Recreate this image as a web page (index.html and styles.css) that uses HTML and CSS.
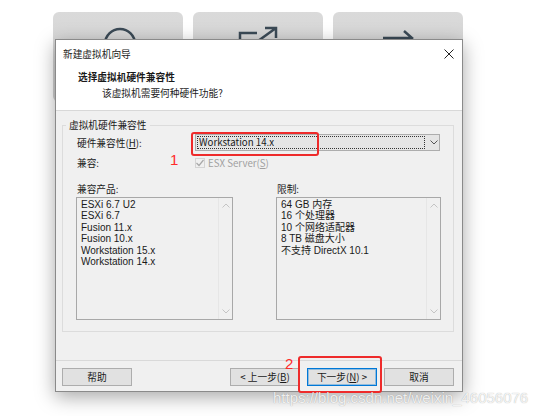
FILE: index.html
```html
<!DOCTYPE html>
<html lang="zh-CN">
<head>
    <meta charset="UTF-8">
    <title>新建虚拟机向导</title>
    <link rel="stylesheet" href="styles.css">
</head>
<body>
    <div class="desktop">
        <div class="tiles">
            <div class="tile">
                <svg class="tile-icon" width="40" height="40" viewBox="0 0 40 40">
                    <circle cx="22" cy="19" r="15" fill="none" stroke="#3b4a56" stroke-width="2.5"/>
                </svg>
            </div>
            <div class="tile">
                <svg class="tile-icon" width="40" height="40" viewBox="0 0 40 40">
                    <path d="M19 8 H2 V30" fill="none" stroke="#3b4a56" stroke-width="2.5"/>
                    <path d="M27 3 H38 V13 M38 3 L20 16" fill="none" stroke="#3b4a56" stroke-width="2.5"/>
                </svg>
            </div>
            <div class="tile">
                <svg class="tile-icon" width="40" height="40" viewBox="0 0 40 40">
                    <path d="M5 13 H34 M26 6 L34 13 L26 20" fill="none" stroke="#3b4a56" stroke-width="2.5"/>
                </svg>
            </div>
        </div>

        <div class="dialog">
            <div class="titlebar">
                <span>新建虚拟机向导</span>
                <svg class="close" width="10" height="10" viewBox="0 0 10 10">
                    <path d="M0.5 0.5 L9.5 9.5 M9.5 0.5 L0.5 9.5" stroke="#222" stroke-width="1"/>
                </svg>
            </div>
            <div class="header">
                <div class="header-title">选择虚拟机硬件兼容性</div>
                <div class="header-sub">该虚拟机需要何种硬件功能?</div>
            </div>

            <div class="body">
                <fieldset class="group">
                    <legend>虚拟机硬件兼容性</legend>
                    <div class="row">
                        <label class="row-label">硬件兼容性(<u>H</u>):</label>
                        <div class="combo">
                            <span class="combo-focus">Workstation 14.x</span>
                            <svg class="chevron" width="8" height="5" viewBox="0 0 8 5">
                                <path d="M0.5 0.5 L4 4 L7.5 0.5" fill="none" stroke="#555" stroke-width="1"/>
                            </svg>
                        </div>
                    </div>
                    <div class="row">
                        <label class="row-label">兼容:</label>
                        <span class="check">
                            <svg width="10" height="10" viewBox="0 0 10 10">
                                <path d="M1.5 5 L4 7.5 L8.5 2" fill="none" stroke="#a8a8a8" stroke-width="1.2"/>
                            </svg>
                        </span>
                        <span class="disabled">ESX Server(<u>S</u>)</span>
                    </div>

                    <div class="lists">
                        <div class="list-col">
                            <div class="list-label">兼容产品:</div>
                            <div class="listbox">
                                <ul class="list-items">
                                    <li>ESXi 6.7 U2</li>
                                    <li>ESXi 6.7</li>
                                    <li>Fusion 11.x</li>
                                    <li>Fusion 10.x</li>
                                    <li>Workstation 15.x</li>
                                    <li>Workstation 14.x</li>
                                </ul>
                                <div class="scrollbar">
                                    <svg width="8" height="5" viewBox="0 0 8 5"><path d="M0.5 4.5 L4 1 L7.5 4.5" fill="none" stroke="#c4c4c4"/></svg>
                                    <svg width="8" height="5" viewBox="0 0 8 5"><path d="M0.5 0.5 L4 4 L7.5 0.5" fill="none" stroke="#c4c4c4"/></svg>
                                </div>
                            </div>
                        </div>
                        <div class="list-col">
                            <div class="list-label">限制:</div>
                            <div class="listbox">
                                <ul class="list-items">
                                    <li>64 GB 内存</li>
                                    <li>16 个处理器</li>
                                    <li>10 个网络适配器</li>
                                    <li>8 TB 磁盘大小</li>
                                    <li>不支持 DirectX 10.1</li>
                                </ul>
                                <div class="scrollbar">
                                    <svg width="8" height="5" viewBox="0 0 8 5"><path d="M0.5 4.5 L4 1 L7.5 4.5" fill="none" stroke="#c4c4c4"/></svg>
                                    <svg width="8" height="5" viewBox="0 0 8 5"><path d="M0.5 0.5 L4 4 L7.5 0.5" fill="none" stroke="#c4c4c4"/></svg>
                                </div>
                            </div>
                        </div>
                    </div>
                </fieldset>
            </div>

            <div class="footer">
                <button class="btn">帮助</button>
                <div class="nav-buttons">
                    <button class="btn">&lt; 上一步(<u>B</u>)</button>
                    <button class="btn btn-default">下一步(<u>N</u>) &gt;</button>
                    <button class="btn">取消</button>
                </div>
            </div>
        </div>

        <!-- annotations drawn over the screenshot -->
        <div class="mark mark-combo"></div>
        <div class="mark mark-next"></div>
        <span class="step step-1">1</span>
        <span class="step step-2">2</span>
        <div class="watermark">https://blog.csdn.net/weixin_46056076</div>
    </div>
</body>
</html>
```

FILE: styles.css
```css
* {
    margin: 0;
    padding: 0;
    box-sizing: border-box;
}

body {
    background-color: #fff;
    color: #1a1a1a;
    font-family: "Noto Sans CJK SC", "Noto Sans", sans-serif;
    font-size: 9.7px;
    overflow: hidden;
}

.desktop {
    position: relative;
    width: 554px;
    height: 416px;
}

.tiles {
    display: flex;
    gap: 10px;
    padding: 12px 0 0 53px;
}

.tile {
    width: 130px;
    height: 90px;
    border-radius: 6px;
    background: linear-gradient(#dadada, #cfcfcf);
    display: flex;
    justify-content: center;
    padding-top: 13px;
}

.dialog {
    position: absolute;
    left: 55px;
    top: 39px;
    width: 408px;
    height: 353px;
    border: 1px solid #8a8a8a;
    background-color: #f0f0f0;
    box-shadow: 0 5px 18px rgba(0, 0, 0, 0.35);
    display: flex;
    flex-direction: column;
}

.titlebar {
    height: 27px;
    background-color: #fff;
    display: flex;
    align-items: center;
    justify-content: space-between;
    padding: 0 8px 0 7px;
}

.header {
    height: 44px;
    background-color: #fff;
    border-bottom: 1px solid #d8d8d8;
    padding: 2px 0 0 22px;
    line-height: 16px;
}

.header-title {
    font-weight: bold;
}

.header-sub {
    padding-left: 24px;
}

.body {
    flex: 1;
    padding: 6px 8px 0 6px;
}

.group {
    height: 215px;
    border: 1px solid #dcdcdc;
    padding: 0 12px 0 13px;
}

.group legend {
    margin-left: -10px;
    padding: 0 3px;
    line-height: 16px;
}

.row {
    display: flex;
    align-items: center;
    height: 17px;
    margin-top: 1px;
}

.row + .row {
    margin-top: 3px;
}

.row-label {
    width: 119px;
    padding-left: 1px;
}

.combo {
    width: 245px;
    height: 17px;
    background-color: #e5e5e5;
    border: 1px solid #adadad;
    padding: 1px;
    display: flex;
    align-items: center;
}

.combo-focus {
    width: 228px;
    height: 100%;
    border: 1px dotted #333;
    line-height: 11px;
    padding-left: 1px;
}

.chevron {
    margin-left: 5px;
}

.check {
    width: 10px;
    height: 10px;
    border: 1px solid #d4d4d4;
    display: flex;
    margin-right: 3px;
}

.check svg {
    margin: -1px;
}

.disabled {
    color: #a0a0a0;
}

.lists {
    display: grid;
    grid-template-columns: 157px 165px;
    column-gap: 43px;
    margin-top: 10px;
}

.list-label {
    line-height: 16px;
    padding-left: 1px;
}

.listbox {
    height: 123px;
    border: 1px solid #a8a8a8;
    display: flex;
}

.list-items {
    flex: 1;
    list-style: none;
    padding: 0.5px 0 0 4px;
    font-family: "Liberation Sans", "Noto Sans CJK SC", sans-serif;
    font-size: 10px;
}

.list-items li {
    height: 11.5px;
    line-height: 11.5px;
}

.scrollbar {
    width: 14px;
    border-left: 1px solid #e6e6e6;
    display: flex;
    flex-direction: column;
    justify-content: space-between;
    align-items: center;
    padding: 5px 0 5px;
}

.footer {
    height: 31px;
    border-top: 1px solid #d9d9d9;
    display: flex;
    justify-content: space-between;
    padding: 7px 8px 0 6px;
}

.nav-buttons {
    display: flex;
    gap: 7px;
}

.btn {
    width: 70px;
    height: 18px;
    background-color: #e1e1e1;
    border: 1px solid #adadad;
    font-family: inherit;
    font-size: 9.7px;
    color: #1a1a1a;
    line-height: 14px;
}

.btn-default {
    border-color: #0078d7;
    box-shadow: inset 0 0 0 1px rgba(0, 120, 215, 0.35);
}

.mark {
    position: absolute;
    border: 2px solid #ee2b2b;
    border-radius: 3px;
}

.mark-combo {
    left: 191px;
    top: 132px;
    width: 128px;
    height: 24px;
}

.mark-next {
    left: 298px;
    top: 356px;
    width: 84px;
    height: 37px;
}

.step {
    position: absolute;
    color: #ff2b2b;
    font-family: "Liberation Sans", sans-serif;
    font-size: 15px;
    line-height: 11px;
}

.step-1 {
    left: 170px;
    top: 154px;
}

.step-2 {
    left: 285px;
    top: 358px;
}

.watermark {
    position: absolute;
    left: 273px;
    top: 389px;
    font-family: "Liberation Sans", sans-serif;
    font-size: 15px;
    color: rgba(255, 255, 255, 0.85);
    text-shadow: 0 0 1px rgba(0, 0, 0, 0.35);
    white-space: nowrap;
}
```
